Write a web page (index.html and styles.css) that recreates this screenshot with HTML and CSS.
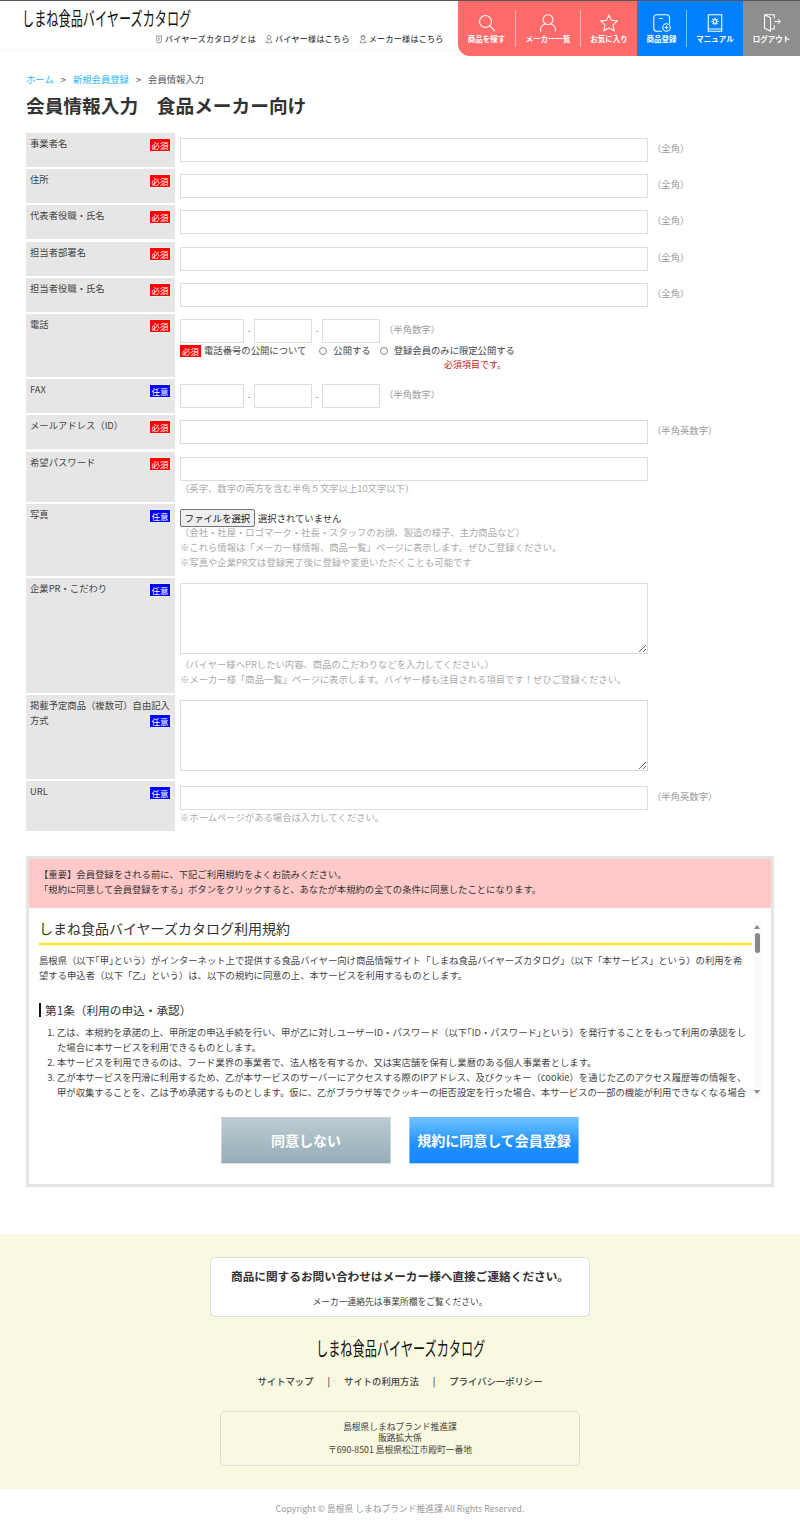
FILE: index.html
```html
<!DOCTYPE html>
<html lang="ja">

<head>
    <meta charset="UTF-8">
    <title>会員情報入力 食品メーカー向け</title>
    <link rel="stylesheet" href="styles.css">
</head>

<body>
    <header class="site-header">
        <div class="header-left">
            <div class="logo"><span>しまね食品バイヤーズカタログ</span></div>
            <ul class="sub-nav">
                <li>
                    <svg viewBox="0 0 12 14"><path d="M2.500 1.500v8a3.500 3.500 0 0 0 7 0v-8l-1.500 1.500h-4z"/><path d="M4.500 6h3M4.500 8.500h3"/></svg>
                    バイヤーズカタログとは
                </li>
                <li>
                    <svg viewBox="0 0 12 14"><circle cx="6" cy="4.500" r="3"/><path d="M4.500 7.500c0 2-3 2.500-3 5h9c0-2.500-3-3-3-5"/></svg>
                    バイヤー様はこちら
                </li>
                <li>
                    <svg viewBox="0 0 12 14"><circle cx="6" cy="4.500" r="3"/><path d="M3 3.500h6M4.500 7.500c0 2-3 2.500-3 5h9c0-2.500-3-3-3-5"/></svg>
                    メーカー様はこちら
                </li>
            </ul>
        </div>
        <nav class="main-nav">
            <div class="nav-group nav-red">
                <a class="nav-item">
                    <svg viewBox="0 0 24 24"><circle cx="10" cy="10" r="8"/><path d="M15.800 15.800l7 7"/></svg>
                    商品を探す
                </a>
                <a class="nav-item">
                    <svg viewBox="0 0 24 24"><circle cx="12" cy="7.500" r="6.500"/><path d="M2 23.500v-2c0-4 2.500-6.800 5.800-8M22 23.500v-2c0-4-2.500-6.800-5.800-8"/></svg>
                    メーカー一覧
                </a>
                <a class="nav-item">
                    <svg viewBox="0 0 24 24"><path d="M12 1.500l3.200 7 7.800.9-5.700 5.200 1.500 7.700-6.800-3.900-6.800 3.900 1.500-7.700L1 9.400l7.800-.9z"/></svg>
                    お気に入り
                </a>
            </div>
            <div class="nav-group nav-blue">
                <a class="nav-item">
                    <svg viewBox="0 0 24 24"><path d="M12 23H5a4 4 0 0 1-4-4V5a4 4 0 0 1 4-4h13a4 4 0 0 1 4 4v8"/><path d="M8 6h5"/><circle cx="18" cy="18" r="5"/><path d="M18 15.500v5M15.500 18h5"/></svg>
                    商品登録
                </a>
                <a class="nav-item">
                    <svg viewBox="0 0 24 24"><path d="M3 1h18v22H3zM3 20h18"/><circle cx="12" cy="10" r="2.500"/><path d="M12 5v2M12 13v2M7 10h2M15 10h2M8.500 6.500l1.500 1.500M14 12l1.500 1.500M15.500 6.500L14 8M10 12l-1.500 1.500"/></svg>
                    マニュアル
                </a>
            </div>
            <div class="nav-group nav-gray">
                <a class="nav-item">
                    <svg viewBox="0 0 24 24"><path d="M15 6V1H2l8 4v18l-8-4V1M10 20h5v-5"/><path d="M15 10h8M20 7l3 3-3 3"/></svg>
                    ログアウト
                </a>
            </div>
        </nav>
    </header>

    <main class="content">
        <p class="breadcrumb"><a>ホーム</a><span class="sep">&gt;</span><a>新規会員登録</a><span class="sep">&gt;</span>会員情報入力</p>
        <h1>会員情報入力　食品メーカー向け</h1>

        <div class="form-rows">
            <div class="row">
                <div class="label"><span>事業者名</span><em class="req">必須</em></div>
                <div class="field"><div class="line"><input class="wide" type="text"><span class="hint">（全角）</span></div></div>
            </div>
            <div class="row">
                <div class="label"><span>住所</span><em class="req">必須</em></div>
                <div class="field"><div class="line"><input class="wide" type="text"><span class="hint">（全角）</span></div></div>
            </div>
            <div class="row">
                <div class="label"><span>代表者役職・氏名</span><em class="req">必須</em></div>
                <div class="field"><div class="line"><input class="wide" type="text"><span class="hint">（全角）</span></div></div>
            </div>
            <div class="row">
                <div class="label"><span>担当者部署名</span><em class="req">必須</em></div>
                <div class="field"><div class="line"><input class="wide" type="text"><span class="hint">（全角）</span></div></div>
            </div>
            <div class="row">
                <div class="label"><span>担当者役職・氏名</span><em class="req">必須</em></div>
                <div class="field"><div class="line"><input class="wide" type="text"><span class="hint">（全角）</span></div></div>
            </div>
            <div class="row">
                <div class="label"><span>電話</span><em class="req">必須</em></div>
                <div class="field">
                    <div class="line">
                        <input class="tel first" type="text"><span class="dash">-</span><input class="tel" type="text"><span class="dash">-</span><input class="tel" type="text"><span class="hint">（半角数字）</span>
                    </div>
                    <div class="publish">
                        <em class="req-inline">必須</em><span class="publish-title">電話番号の公開について</span>
                        <span class="radio"></span><span>公開する</span>
                        <span class="radio"></span><span>登録会員のみに限定公開する</span>
                    </div>
                    <p class="error">必須項目です。</p>
                </div>
            </div>
            <div class="row">
                <div class="label"><span>FAX</span><em class="opt">任意</em></div>
                <div class="field">
                    <div class="line">
                        <input class="tel first" type="text"><span class="dash">-</span><input class="tel" type="text"><span class="dash">-</span><input class="tel" type="text"><span class="hint">（半角数字）</span>
                    </div>
                </div>
            </div>
            <div class="row">
                <div class="label"><span>メールアドレス（ID）</span><em class="req">必須</em></div>
                <div class="field"><div class="line"><input class="wide" type="text"><span class="hint">（半角英数字）</span></div></div>
            </div>
            <div class="row">
                <div class="label"><span>希望パスワード</span><em class="req">必須</em></div>
                <div class="field">
                    <div class="line"><input class="wide" type="text"></div>
                    <p class="note">（英字、数字の両方を含む半角５文字以上10文字以下）</p>
                </div>
            </div>
            <div class="row">
                <div class="label"><span>写真</span><em class="opt">任意</em></div>
                <div class="field">
                    <div class="file-line"><button class="file-btn" type="button">ファイルを選択</button>選択されていません</div>
                    <p class="note">（会社・社屋・ロゴマーク・社長・スタッフのお顔、製造の様子、主力商品など）</p>
                    <p class="note">※これら情報は「メーカー様情報、商品一覧」ページに表示します。ぜひご登録ください。</p>
                    <p class="note">※写真や企業PR文は登録完了後に登録や変更いただくことも可能です</p>
                </div>
            </div>
            <div class="row">
                <div class="label"><span>企業PR・こだわり</span><em class="opt">任意</em></div>
                <div class="field">
                    <textarea class="wide"></textarea>
                    <p class="note">（バイヤー様へPRしたい内容、商品のこだわりなどを入力してください。）</p>
                    <p class="note">※メーカー様「商品一覧」ページに表示します。バイヤー様も注目される項目です！ぜひご登録ください。</p>
                </div>
            </div>
            <div class="row">
                <div class="label label-block">掲載予定商品（複数可）自由記入方式<em class="opt">任意</em></div>
                <div class="field field-tall"><textarea class="wide"></textarea></div>
            </div>
            <div class="row">
                <div class="label"><span>URL</span><em class="opt">任意</em></div>
                <div class="field">
                    <div class="line"><input class="wide" type="text"><span class="hint">（半角英数字）</span></div>
                    <p class="note">※ホームページがある場合は入力してください。</p>
                </div>
            </div>
        </div>

        <section class="terms">
            <div class="terms-alert">
                【重要】会員登録をされる前に、下記ご利用規約をよくお読みください。<br>
                「規約に同意して会員登録をする」ボタンをクリックすると、あなたが本規約の全ての条件に同意したことになります。
            </div>
            <div class="terms-scroll">
                <div class="terms-body">
                    <h2>しまね食品バイヤーズカタログ利用規約</h2>
                    <p>島根県（以下｢甲｣という）がインターネット上で提供する食品バイヤー向け商品情報サイト「しまね食品バイヤーズカタログ」（以下「本サービス」という）の利用を希望する申込者（以下「乙」という）は、以下の規約に同意の上、本サービスを利用するものとします。</p>
                    <h3>第1条（利用の申込・承認）</h3>
                    <ol>
                        <li>乙は、本規約を承諾の上、甲所定の申込手続を行い、甲が乙に対しユーザーID・パスワード（以下｢ID・パスワード｣という）を発行することをもって利用の承認をした場合に本サービスを利用できるものとします。</li>
                        <li>本サービスを利用できるのは、フード業界の事業者で、法人格を有するか、又は実店舗を保有し業暦のある個人事業者とします。</li>
                        <li>乙が本サービスを円滑に利用するため、乙が本サービスのサーバーにアクセスする際のIPアドレス、及びクッキー（cookie）を通じた乙のアクセス履歴等の情報を、甲が収集することを、乙は予め承諾するものとします。仮に、乙がブラウザ等でクッキーの拒否設定を行った場合、本サービスの一部の機能が利用できなくなる場合があります。</li>
                    </ol>
                </div>
                <div class="scrollbar">
                    <span class="arrow-up"></span>
                    <span class="thumb"></span>
                    <span class="arrow-down"></span>
                </div>
            </div>
            <div class="terms-buttons">
                <button class="btn btn-gray" type="button">同意しない</button>
                <button class="btn btn-blue" type="button">規約に同意して会員登録</button>
            </div>
        </section>
    </main>

    <footer class="site-footer">
        <div class="footer-main">
            <div class="contact-box">
                <p class="contact-title">商品に関するお問い合わせはメーカー様へ直接ご連絡ください。</p>
                <p class="contact-sub">メーカー連絡先は事業所欄をご覧ください。</p>
            </div>
            <div class="footer-logo"><span>しまね食品バイヤーズカタログ</span></div>
            <ul class="footer-links">
                <li>サイトマップ</li>
                <li class="bar">|</li>
                <li>サイトの利用方法</li>
                <li class="bar">|</li>
                <li>プライバシーポリシー</li>
            </ul>
            <div class="address-box">
                島根県しまねブランド推進課<br>
                販路拡大係<br>
                〒690-8501 島根県松江市殿町一番地
            </div>
        </div>
        <p class="copyright">Copyright © 島根県 しまねブランド推進課 All Rights Reserved.</p>
    </footer>
</body>

</html>
```
FILE: styles.css
```css
* {
    box-sizing: border-box;
}

body {
    margin: 0;
    font-family: "Noto Sans CJK JP", "Noto Sans", sans-serif;
    font-size: 9.33px;
    line-height: 15px;
    color: #333;
    background: #fff;
}

p {
    margin: 0;
}

ul {
    margin: 0;
    padding: 0;
    list-style: none;
}

/* header */
.site-header {
    display: flex;
    justify-content: space-between;
    height: 56px;
    border-top: 1px solid #555;
    background: linear-gradient(to bottom, #fff 49px, #f5f5f5 49px, #fff 51px);
}

.header-left {
    padding-left: 22px;
}

.logo {
    height: 31px;
    padding-top: 6px;
    font-size: 19px;
    line-height: 22px;
    color: #111;
    white-space: nowrap;
}

.logo span,
.footer-logo span {
    display: inline-block;
    transform: scaleX(0.64);
    transform-origin: left;
}

.sub-nav {
    display: flex;
    gap: 9px;
    margin-left: 133px;
    font-size: 8px;
    letter-spacing: 0.33px;
    line-height: 14px;
    color: #444;
    font-weight: 500;
}

.sub-nav li {
    display: flex;
    align-items: center;
    gap: 2px;
}

.sub-nav svg {
    width: 8px;
    height: 10px;
    fill: none;
    stroke: #666;
    stroke-width: 1;
}

.main-nav {
    display: flex;
    height: 55px;
}

.nav-group {
    display: grid;
    align-items: center;
}

.nav-red {
    grid-template-columns: 57px 65px 57px;
    background: #ff6b6b;
    border-bottom-left-radius: 12px;
}

.nav-blue {
    grid-template-columns: 49px 57px;
    background: #0080ff;
}

.nav-gray {
    grid-template-columns: 57px;
    background: #8e8e8e;
}

.nav-item {
    height: 37px;
    display: flex;
    flex-direction: column;
    align-items: center;
    font-size: 7.500px;
    font-weight: 700;
    line-height: 10px;
    color: #fff;
    white-space: nowrap;
    border-left: 1px solid rgba(255, 255, 255, 0.5);
}

.nav-item:first-child {
    border-left: none;
}

.nav-item svg {
    width: 18px;
    height: 18px;
    margin: 4px 0 2px;
    fill: none;
    stroke: #fff;
    stroke-width: 1.400;
}

/* form */
.content {
    padding: 0 26px;
}

.breadcrumb {
    margin-top: 16px;
    line-height: 15px;
    color: #555;
}

.breadcrumb a {
    color: #22b8f8;
}

.sep {
    margin: 0 7px;
}

h1 {
    margin: 4px 0 15px;
    font-size: 18.700px;
    line-height: 27px;
    font-weight: 700;
    color: #333;
}

.form-rows {
    display: flex;
    flex-direction: column;
    gap: 2.200px;
}

.row {
    display: flex;
    gap: 5px;
}

.label {
    flex: 0 0 149px;
    display: flex;
    justify-content: space-between;
    align-items: flex-start;
    padding: 3px 4px;
    background: #e6e6e6;
    color: #444;
}

.label-block {
    display: block;
}

.label-block .opt {
    float: right;
    margin-top: 1px;
}

.req,
.opt {
    flex: none;
    margin-top: 2px;
    width: 22px;
    height: 14px;
    border: 1px solid #eee;
    font-size: 8.500px;
    line-height: 12px;
    text-align: center;
    font-style: normal;
    color: #fff;
}

.req {
    background: #f00;
}

.opt {
    background: #00f;
}

.field {
    flex: 1;
    padding: 5px 0;
}

.field-tall {
    padding-bottom: 8px;
}

.line {
    display: flex;
    align-items: center;
}

input,
textarea {
    display: block;
    height: 24px;
    border: 1px solid #ddd;
    background: #fff;
    padding: 0 4px;
    margin: 0;
    font: inherit;
}

.wide {
    width: 468px;
}

textarea.wide {
    height: 71px;
}

.tel {
    width: 58px;
}

.tel.first {
    width: 64px;
}

.dash {
    width: 10px;
    text-align: center;
    color: #888;
}

.hint {
    margin: 0 0 3px 4px;
    color: #999;
    white-space: nowrap;
}

.publish {
    display: flex;
    align-items: center;
    height: 12px;
    margin-top: 2px;
    color: #444;
}

.req-inline {
    margin-right: 3px;
    width: 21px;
    height: 12px;
    font-size: 8.500px;
    line-height: 12px;
    text-align: center;
    font-style: normal;
    color: #fff;
    background: #f00;
}

.publish-title {
    margin-right: 4px;
}

.radio {
    width: 8px;
    height: 8px;
    margin: 0 6px 0 9px;
    border: 1px solid #888;
    border-radius: 50%;
}

.error {
    margin-top: 1px;
    padding-left: 264px;
    font-size: 9px;
    line-height: 14px;
    color: #b22;
}

.note {
    line-height: 15px;
    color: #aaa;
}

.note:last-child {
    margin-bottom: 1px;
}

textarea + .note {
    margin-top: 3px;
}

.file-line {
    display: flex;
    align-items: flex-start;
    height: 16px;
    line-height: 18px;
    color: #333;
}

.file-btn {
    width: 75px;
    height: 18px;
    margin-right: 3px;
    padding: 0;
    border: 1px solid #767676;
    border-radius: 2px;
    background: #efefef;
    font: inherit;
    line-height: 16px;
    color: #111;
}

/* terms */
.terms {
    margin-top: 24.600px;
    border: 3px solid #e5e5e5;
    background: #fff;
    height: 331px;
}

.terms-alert {
    height: 49px;
    padding: 8px 10px;
    background: #ffc9c9;
    color: #333;
}

.terms-scroll {
    display: flex;
    height: 192px;
    padding-left: 10px;
    overflow: hidden;
}

.terms-body {
    flex: none;
    width: 713px;
    color: #444;
}

.terms-body h2 {
    margin: 0;
    padding: 10px 0 4px;
    border-bottom: 2px solid #ffe600;
    font-size: 14px;
    line-height: 21px;
    font-weight: 400;
    color: #333;
}

.terms-body p {
    margin-top: 8px;
    padding-right: 4px;
}

.terms-body h3 {
    margin: 20px 0 8px;
    padding-left: 4px;
    border-left: 2px solid #111;
    font-size: 11.670px;
    line-height: 14px;
    font-weight: 400;
    color: #333;
}

.terms-body ol {
    margin: 0;
    padding-left: 18px;
}

.scrollbar {
    flex: none;
    width: 8px;
    margin: 13px 0 0 1px;
    padding-top: 4px;
    display: flex;
    flex-direction: column;
    align-items: center;
    background: #fafafa;
}

.thumb {
    width: 5px;
    height: 20px;
    margin-top: 4px;
    border-radius: 3px;
    background: #888;
}

.arrow-up,
.arrow-down {
    width: 0;
    height: 0;
    border-left: 3px solid transparent;
    border-right: 3px solid transparent;
}

.arrow-up {
    border-bottom: 4px solid #888;
}

.arrow-down {
    margin-top: auto;
    margin-bottom: 6px;
    border-top: 4px solid #888;
}

.terms-buttons {
    display: flex;
    justify-content: center;
    gap: 18px;
    margin-top: 17px;
}

.btn {
    width: 170px;
    height: 47px;
    padding: 0;
    border: 1px solid rgba(255, 255, 255, 0.4);
    font: inherit;
    font-size: 14px;
    font-weight: 700;
    color: #fff;
}

.btn-gray {
    background: linear-gradient(to bottom, #bccbd1, #95adb8);
}

.btn-blue {
    background: linear-gradient(to bottom, #6cc4ff, #1e8fff 60%, #1a86ff);
}

/* footer */
.site-footer {
    margin-top: 47px;
}

.footer-main {
    height: 255px;
    padding-top: 23px;
    background: #f9f8e0;
    display: flex;
    flex-direction: column;
    align-items: center;
}

.contact-box {
    width: 380px;
    height: 60px;
    padding-top: 9px;
    background: #fff;
    border: 1px solid #ddd;
    border-radius: 5px;
    text-align: center;
}

.contact-title {
    font-size: 11.670px;
    line-height: 18px;
    font-weight: 700;
    color: #333;
}

.contact-sub {
    margin-top: 10px;
    font-size: 8.750px;
    line-height: 14px;
    color: #444;
}

.footer-logo {
    margin-top: 20px;
    width: 168px;
    font-size: 19px;
    line-height: 22px;
    color: #111;
    white-space: nowrap;
}

.footer-links {
    display: flex;
    gap: 14px;
    margin-top: 15px;
    line-height: 14px;
    font-weight: 500;
    color: #444;
}

.address-box {
    width: 360px;
    height: 55px;
    margin-top: 23px;
    padding-top: 9px;
    border: 1px solid #ddd;
    border-radius: 5px;
    text-align: center;
    font-size: 8.750px;
    line-height: 11.500px;
    color: #444;
}

.copyright {
    padding-top: 13px;
    height: 39px;
    text-align: center;
    font-size: 8.750px;
    line-height: 14px;
    color: #999;
}
```
